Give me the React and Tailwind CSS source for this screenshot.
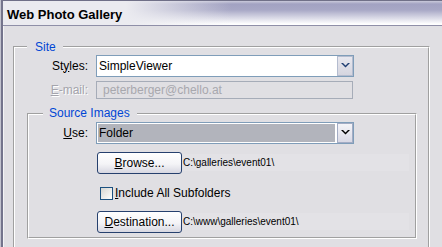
import React from 'react';

// small XP style chevron for the combo buttons
const Chevron = ({ color }) => (
  <svg width="9" height="5" viewBox="0 0 9 5">
    <polygon points="0,0 2,0 4.5,2.5 7,0 9,0 4.5,4.5" fill={color} />
  </svg>
);

// etched group box with a blue caption over the top line
const Group = ({ title, legendClass, className, innerClass, children }) => (
  <div className={`relative border border-t-[#a0a0a0] border-l-[#a0a0a0] border-b-white border-r-white ${className}`}>
    <div className={`border border-t-white border-l-white border-b-[#a0a0a0] border-r-[#a0a0a0] ${innerClass}`}>
      {children}
    </div>
    <span className={`absolute h-[14px] bg-[#e0dfe3] text-[12px] leading-[14px] text-[#0046d5] ${legendClass}`}>
      {title}
    </span>
  </div>
);

const XpButton = ({ children }) => (
  <button className="flex h-[22px] w-[85px] items-center justify-center rounded-[3px] border border-[#26406e] bg-[linear-gradient(#ffffff_0%,#f4f4f7_55%,#d7d7e1_100%)] text-[12px] text-black">
    {children}
  </button>
);

const PathText = ({ children }) => (
  <div className="ml-[1px] flex h-[17px] w-[226px] items-center bg-[#e3e2e6] text-[10px] text-black">
    {children}
  </div>
);

export default function App() {
  return (
    <div className="h-[247px] w-[442px] overflow-hidden border-l border-l-[#c2c2ce] bg-[#e0dfe3] font-['Liberation_Sans',Arial,sans-serif]">
      <div className="flex h-full flex-col border-l-2 border-l-[#74748c]">
        {/* Title bar */}
        <div className="flex h-[28px] items-center border-t border-b border-t-[#707088] border-b-[#8f8fa8] bg-[image:linear-gradient(to_right,#ebebf0_0%,#ebebf0_28%,rgba(235,235,240,0)_52%),linear-gradient(to_bottom,#cacadb_0px,#a2a2c2_3px,#a8a8c6_9px,#ffffff_23px)] pl-[4px] pt-[4px]">
          <span className="text-[13px] font-bold text-black">Web Photo Gallery</span>
        </div>

        {/* Body */}
        <div className="flex-1 border-l border-l-[#f4f4f6] pl-[9px] pt-[20px]">
          <Group
            title="Site"
            className="w-[417px]"
            innerClass="pt-[7px] pb-[30px]"
            legendClass="left-[13px] top-[-7px] pl-[8px] pr-[7px]"
          >
            <div className="flex h-[22px] items-center">
              <span className="w-[73px] text-right text-[12px] text-black">
                St<u>y</u>les:
              </span>
              <div className="ml-[8px] flex h-[22px] w-[258px] border border-[#7f9db9] bg-white">
                <div className="flex flex-1 items-center pl-[2px] text-[12px] text-black">SimpleViewer</div>
                <div className="ml-[1px] flex h-full w-[16px] items-center justify-center border border-[#b4bccf] bg-[linear-gradient(#e8e8ef,#d5d5df)]">
                  <Chevron color="#1f3e72" />
                </div>
              </div>
            </div>

            <div className="mt-[4px] flex h-[18px] items-center">
              <span className="w-[73px] text-right text-[12px] text-[#a4a4ac] [text-shadow:1px_1px_0_#ffffff]">
                <u>E</u>-mail:
              </span>
              <div className="ml-[8px] flex h-[18px] w-[257px] items-center border border-[#a6acb8] pl-[6px] text-[12px] text-[#a8a8ae]">
                peterberger@chello.at
              </div>
            </div>

            <Group
              title="Source Images"
              className="ml-[12px] mt-[14px] w-[390px]"
              innerClass="h-[124px] pt-[7px]"
              legendClass="left-[15px] top-[-8px] pl-[6px] pr-[7px]"
            >
              <div className="flex h-[22px] items-center">
                <span className="w-[59px] text-right text-[12px] text-black">
                  <u>U</u>se:
                </span>
                <div className="ml-[8px] flex h-[22px] w-[258px] border border-[#7f9db9] bg-white">
                  <div className="m-[1px] mr-[2px] flex flex-1 items-center bg-[#b2b4bc] pl-[1px] text-[12px] text-black">
                    Folder
                  </div>
                  <div className="flex h-full w-[16px] items-center justify-center border border-[#a3acc4] bg-[linear-gradient(#f4f4f8,#d9d9e5)]">
                    <Chevron color="#000000" />
                  </div>
                </div>
              </div>

              <div className="ml-[68px] mt-[8px] flex h-[22px] items-center">
                <XpButton>
                  <u>B</u>rowse...
                </XpButton>
                <PathText>C:\galleries\event01\</PathText>
              </div>

              <div className="ml-[71px] mt-[13px] flex h-[13px] items-center">
                <div className="h-[13px] w-[13px] border border-[#1c5180] bg-[linear-gradient(135deg,#d6d6d2,#ffffff)]" />
                <span className="ml-[2px] text-[12px] leading-[13px] text-black">
                  <u>I</u>nclude All Subfolders
                </span>
              </div>

              <div className="ml-[68px] mt-[11px] flex h-[22px] items-center">
                <XpButton>
                  <u>D</u>estination...
                </XpButton>
                <PathText>C:\www\galleries\event01\</PathText>
              </div>
            </Group>
          </Group>
        </div>
      </div>
    </div>
  );
}
